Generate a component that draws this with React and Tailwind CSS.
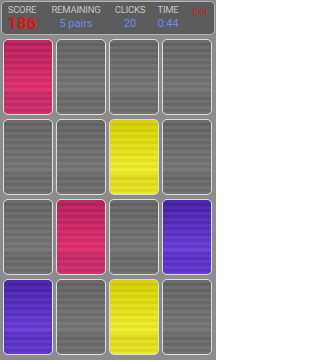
import React from 'react';

const CARD_BG = {
  pink: 'bg-[linear-gradient(to_bottom,#b81e5a_0%,#e0306f_70%,#c62a66_73%,#d02c6a_100%)]',
  gray: 'bg-[linear-gradient(to_bottom,#646464_0%,#767676_70%,#6a6a6a_73%,#6e6e6e_100%)]',
  yellow: 'bg-[linear-gradient(to_bottom,#d6ce00_0%,#f2f030_72%,#e2da1a_75%,#ece628_100%)]',
  purple: 'bg-[linear-gradient(to_bottom,#4520a8_0%,#6a3ad8_70%,#5a30c4_73%,#6234d0_100%)]',
};

const BOARD = [
  'pink', 'gray', 'gray', 'gray',
  'gray', 'gray', 'yellow', 'gray',
  'gray', 'pink', 'gray', 'purple',
  'purple', 'gray', 'yellow', 'gray',
];

function Stat({ label, value, big }) {
  return (
    <div className="flex flex-col items-center">
      <span className="h-[11px] text-[9.5px] leading-[11px] tracking-[-0.2px] text-[#c4c4c4]">{label}</span>
      {big ? (
        <span className="h-[17px] text-[17px] font-bold leading-[17px] text-[#e01414]">{value}</span>
      ) : (
        <span className="mt-[2px] h-[13px] text-[11px] leading-[13px] text-[#7088ec]">{value}</span>
      )}
    </div>
  );
}

export default function App() {
  return (
    <div className="flex h-[360px] w-[216px] flex-col overflow-hidden bg-[#8c8c8c] font-['Roboto',sans-serif]">
      {/* Header */}
      <div className="mx-[1px] mt-[1px] grid h-[34px] grid-cols-[40px_68px_40px_36px_28px] rounded-[5px] border border-[#b4b4b4] bg-[#5c5c5c] pt-[2px]">
        <Stat label="SCORE" value="186" big />
        <Stat label="REMAINING" value="5 pairs" />
        <Stat label="CLICKS" value="20" />
        <Stat label="TIME" value="0:44" />
        <span className="mt-[3px] text-center text-[9px] leading-[11px] text-[#d02020]">Exit</span>
      </div>

      {/* Board */}
      <div className="mt-[4px] grid grid-cols-[repeat(4,50px)] grid-rows-[repeat(4,76px)] gap-x-[3px] gap-y-[4px] pl-[3px]">
        {BOARD.map((c, i) => (
          <div
            key={i}
            className={`relative overflow-hidden rounded-[5px] border border-[#dedede] ${CARD_BG[c]}`}
          >
            <div className="absolute inset-0 bg-[repeating-linear-gradient(to_bottom,rgba(255,255,255,0.04)_0px,rgba(255,255,255,0.04)_3px,rgba(0,0,0,0.04)_3px,rgba(0,0,0,0.04)_6px)]" />
          </div>
        ))}
      </div>
    </div>
  );
}
